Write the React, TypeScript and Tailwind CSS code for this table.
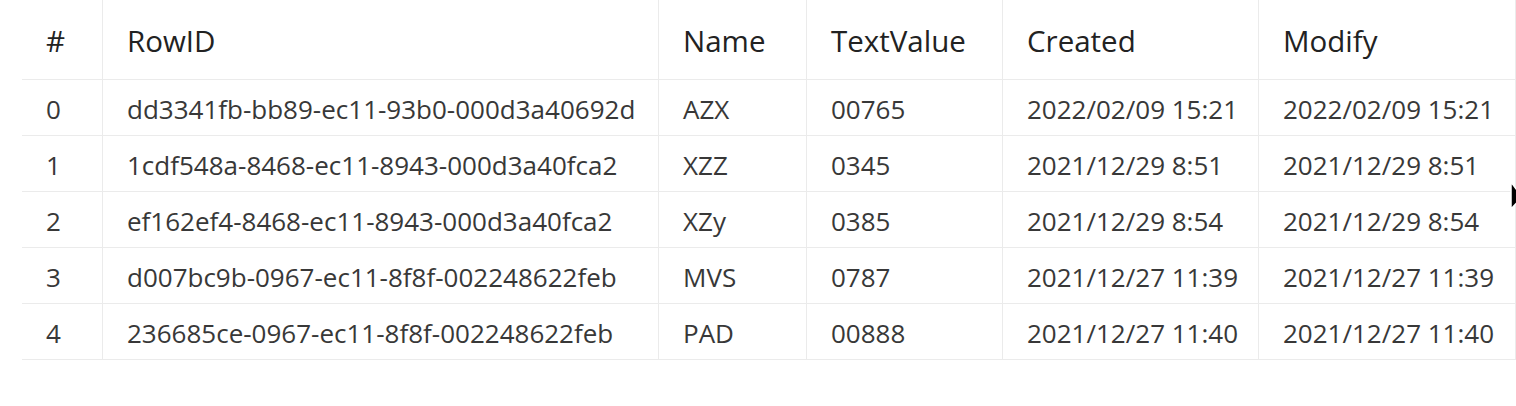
const columns = [
  { key: "idx", label: "#", width: "w-[81px]" },
  { key: "rowId", label: "RowID", width: "w-[556px]" },
  { key: "name", label: "Name", width: "w-[148px]" },
  { key: "textValue", label: "TextValue", width: "w-[196px]" },
  { key: "created", label: "Created", width: "w-[256px]" },
  { key: "modify", label: "Modify", width: "w-[257px]" },
] as const;

type Row = {
  idx: string;
  rowId: string;
  name: string;
  textValue: string;
  created: string;
  modify: string;
};

const rows: Row[] = [
  {
    idx: "0",
    rowId: "dd3341fb-bb89-ec11-93b0-000d3a40692d",
    name: "AZX",
    textValue: "00765",
    created: "2022/02/09 15:21",
    modify: "2022/02/09 15:21",
  },
  {
    idx: "1",
    rowId: "1cdf548a-8468-ec11-8943-000d3a40fca2",
    name: "XZZ",
    textValue: "0345",
    created: "2021/12/29 8:51",
    modify: "2021/12/29 8:51",
  },
  {
    idx: "2",
    rowId: "ef162ef4-8468-ec11-8943-000d3a40fca2",
    name: "XZy",
    textValue: "0385",
    created: "2021/12/29 8:54",
    modify: "2021/12/29 8:54",
  },
  {
    idx: "3",
    rowId: "d007bc9b-0967-ec11-8f8f-002248622feb",
    name: "MVS",
    textValue: "0787",
    created: "2021/12/27 11:39",
    modify: "2021/12/27 11:39",
  },
  {
    idx: "4",
    rowId: "236685ce-0967-ec11-8f8f-002248622feb",
    name: "PAD",
    textValue: "00888",
    created: "2021/12/27 11:40",
    modify: "2021/12/27 11:40",
  },
];

export default function App() {
  return (
    <div className="relative h-[406px] w-[1516px] overflow-hidden bg-white font-['Open_Sans',sans-serif] text-[#333333]">
      <div className="ml-[22px]">
        {/* header */}
        <div className="flex h-[80px] border-b border-[#ebebeb]">
          {columns.map((col) => (
            <div
              key={col.key}
              className={`${col.width} flex items-center border-r border-[#ebebeb] pt-[4px] pl-6 text-[29.5px] font-medium text-[#222222]`}
            >
              {col.label}
            </div>
          ))}
        </div>

        {/* body */}
        {rows.map((row) => (
          <div key={row.idx} className="flex h-[56px] border-b border-[#ebebeb]">
            {columns.map((col) => (
              <div
                key={col.key}
                className={`${col.width} flex items-center border-r border-[#ebebeb] pt-[3px] pl-6 text-[26px] text-[#383838]`}
              >
                {row[col.key]}
              </div>
            ))}
          </div>
        ))}
      </div>

      {/* mouse pointer peeking in at the right edge */}
      <svg
        className="absolute left-[1510px] top-[181px]"
        width="12"
        height="30"
        viewBox="0 0 12 30"
      >
        <path d="M1 1 L1 28 L12 16 Z" fill="#000" stroke="#fff" strokeWidth="1.5" />
      </svg>
    </div>
  );
}
